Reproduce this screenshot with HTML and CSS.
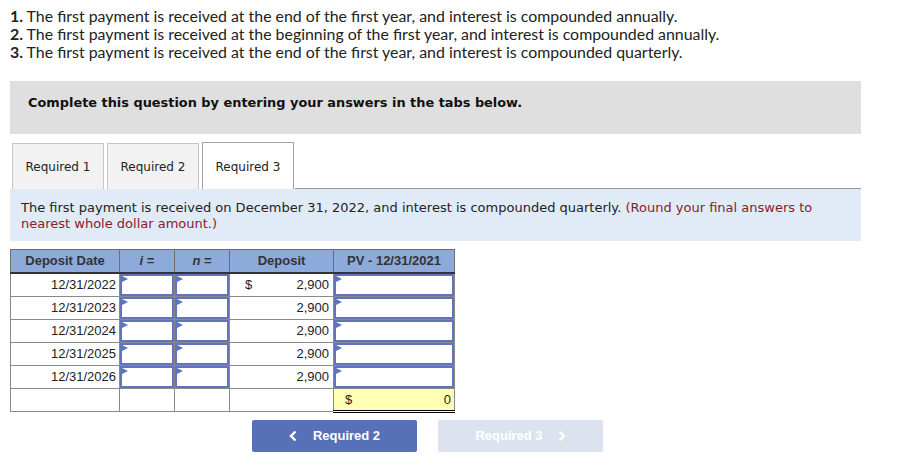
FILE: index.html
```html
<!DOCTYPE html>
<html>
<head>
<meta charset="utf-8">
<link rel="stylesheet" href="styles.css">
</head>
<body>
<div class="page">
  <ol class="reqs">
    <li><b>1.</b> The first payment is received at the end of the first year, and interest is compounded annually.</li>
    <li><b>2.</b> The first payment is received at the beginning of the first year, and interest is compounded annually.</li>
    <li><b>3.</b> The first payment is received at the end of the first year, and interest is compounded quarterly.</li>
  </ol>

  <div class="banner">Complete this question by entering your answers in the tabs below.</div>

  <div class="tabs">
    <div class="tab">Required 1</div>
    <div class="tab">Required 2</div>
    <div class="tab active">Required 3</div>
    <div class="tab-fill"></div>
  </div>

  <div class="info">The first payment is received on December 31, 2022, and interest is compounded quarterly. <span class="note">(Round your final answers to nearest whole dollar amount.)</span></div>

  <table class="grid">
    <colgroup>
      <col class="c-date"><col class="c-i"><col class="c-n"><col class="c-dep"><col class="c-pv">
    </colgroup>
    <thead>
      <tr><th>Deposit Date</th><th><i>i</i> =</th><th><i>n</i> =</th><th>Deposit</th><th>PV - 12/31/2021</th></tr>
    </thead>
    <tbody>
      <tr><td class="date">12/31/2022</td><td class="in"><div class="box"></div></td><td class="in"><div class="box"></div></td><td class="dep"><span class="cur">$</span><span>2,900</span></td><td class="in"><div class="box"></div></td></tr>
      <tr><td class="date">12/31/2023</td><td class="in"><div class="box"></div></td><td class="in"><div class="box"></div></td><td class="dep"><span class="cur"></span><span>2,900</span></td><td class="in"><div class="box"></div></td></tr>
      <tr><td class="date">12/31/2024</td><td class="in"><div class="box"></div></td><td class="in"><div class="box"></div></td><td class="dep"><span class="cur"></span><span>2,900</span></td><td class="in"><div class="box"></div></td></tr>
      <tr><td class="date">12/31/2025</td><td class="in"><div class="box"></div></td><td class="in"><div class="box"></div></td><td class="dep"><span class="cur"></span><span>2,900</span></td><td class="in"><div class="box"></div></td></tr>
      <tr><td class="date">12/31/2026</td><td class="in"><div class="box"></div></td><td class="in"><div class="box"></div></td><td class="dep"><span class="cur"></span><span>2,900</span></td><td class="in"><div class="box"></div></td></tr>
      <tr class="total"><td></td><td></td><td></td><td></td><td class="sum"><div class="sumin"><span>$</span><span>0</span></div></td></tr>
    </tbody>
  </table>

  <div class="nav">
    <div class="btn prev"><svg class="chev" width="8" height="12" viewBox="0 0 8 12"><path d="M6.5 1.5 L2 6 L6.5 10.5" fill="none" stroke="#fff" stroke-width="2.4"/></svg>Required 2</div>
    <div class="btn next disabled">Required 3<svg class="chev" width="8" height="12" viewBox="0 0 8 12"><path d="M1.5 1.5 L6 6 L1.5 10.5" fill="none" stroke="#fff" stroke-width="2.4"/></svg></div>
  </div>
</div>
</body>
</html>
```

FILE: styles.css
```css
* { box-sizing: border-box; }
html, body { margin: 0; padding: 0; background: #fff; }
.page { padding: 7px 0 0 10px; width: 861px; }

.reqs {
  list-style: none;
  margin: 0;
  padding: 0;
  font-family: Lato, "Open Sans", sans-serif;
  font-size: 15.9px;
  line-height: 18px;
  color: #222;
}
.reqs b { font-weight: 700; }

.banner {
  margin-top: 20px;
  background: #dfdfdf;
  height: 53px;
  padding: 14px 0 0 18px;
  font-family: "DejaVu Sans", Verdana, sans-serif;
  font-weight: bold;
  font-size: 12.9px;
  color: #111;
}

.tabs {
  display: flex;
  margin-top: 8px;
  height: 47px;
  align-items: flex-end;
}
.tab {
  height: 46px;
  width: 92px;
  margin-left: 2px;
  margin-right: 1px;
  background: #f2f2f2;
  border: 1px solid #c6c6c6;
  border-bottom: none;
  display: flex;
  align-items: center;
  justify-content: center;
  padding-top: 1px;
  font-family: "DejaVu Sans", Verdana, sans-serif;
  font-size: 12px;
  color: #222;
}
.tab.active {
  background: #fff;
  border-color: #a0a0a0;
  height: 47px;
  margin-left: 2px;
}
.tab-fill {
  flex: 1;
  border-bottom: 1px solid #999;
  height: 1px;
}

.info {
  background: #e0ebf7;
  height: 52px;
  padding: 11px 10px 0 11px;
  font-family: "DejaVu Sans", Verdana, sans-serif;
  font-size: 13px;
  line-height: 16px;
  color: #222;
}
.info .note { color: #8b1a2b; }

.grid {
  margin-top: 8px;
  border-collapse: collapse;
  table-layout: fixed;
  width: 444px;
  font-family: "Liberation Sans", Arial, sans-serif;
  font-size: 13px;
  color: #222;
}
.c-date { width: 109px; }
.c-i { width: 55px; }
.c-n { width: 55px; }
.c-dep { width: 104px; }
.c-pv { width: 121px; }

.grid th {
  background: #8eaadb;
  height: 23px;
  font-weight: bold;
  border: 1px solid #6f6f6f;
  border-bottom: 2px solid #333;
  padding: 0;
  color: #333;
}
.grid th i { font-weight: bold; }
.grid td {
  border: 1px solid #8a8a8a;
  height: 23px;
  padding: 0;
}
.grid td.date { text-align: right; padding-right: 3px; }
.grid td.dep { padding: 0 4px 0 15px; }
.dep span { display: inline-block; }
.dep .cur { width: 48px; }
.dep span + span { width: 36px; text-align: right; }
.grid td.in { padding: 0; }
.box {
  height: 22px;
  border: 2px solid #6075b9;
  position: relative;
  background: #fff;
}
.box::before {
  content: "";
  position: absolute;
  left: 0;
  top: 0;
  border-left: 6px solid #5b73c0;
  border-top: 3px solid transparent;
  border-bottom: 3px solid transparent;
}
.grid td.sum { padding: 0; border-bottom: 3px double #000; }
.sumin {
  background: #ffffb5;
  height: 21px;
  display: flex;
  align-items: center;
  justify-content: space-between;
  padding: 0 3px 0 11px;
}

.nav {
  display: flex;
  gap: 21px;
  margin: 7px 0 0 242px;
}
.btn {
  width: 165px;
  height: 32px;
  border-radius: 2px;
  background: #5671b8;
  color: #fff;
  font-family: "Liberation Sans", Arial, sans-serif;
  font-weight: bold;
  font-size: 13px;
  display: flex;
  align-items: center;
  justify-content: center;
}
.btn.disabled { background: #dce3ef; }
.prev .chev { margin-right: 16px; }
.next .chev { margin-left: 15px; }
```
